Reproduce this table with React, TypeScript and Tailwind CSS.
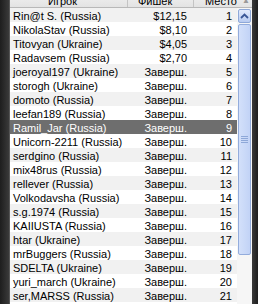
const rows: [string, string, number][] = [
  ["Rin@t S. (Russia)", "$12,15", 1],
  ["NikolaStav (Russia)", "$8,10", 2],
  ["Titovyan (Ukraine)", "$4,05", 3],
  ["Radavsem (Russia)", "$2,70", 4],
  ["joeroyal197 (Ukraine)", "Заверш.", 5],
  ["storogh (Ukraine)", "Заверш.", 6],
  ["domoto (Russia)", "Заверш.", 7],
  ["leefan189 (Russia)", "Заверш.", 8],
  ["Ramil_Jar (Russia)", "Заверш.", 9],
  ["Unicorn-2211 (Russia)", "Заверш.", 10],
  ["serdgino (Russia)", "Заверш.", 11],
  ["mix48rus (Russia)", "Заверш.", 12],
  ["rellever (Russia)", "Заверш.", 13],
  ["Volkodavsha (Russia)", "Заверш.", 14],
  ["s.g.1974 (Russia)", "Заверш.", 15],
  ["KAIIUSTA (Russia)", "Заверш.", 16],
  ["htar (Ukraine)", "Заверш.", 17],
  ["mrBuggers (Russia)", "Заверш.", 18],
  ["SDELTA (Ukraine)", "Заверш.", 19],
  ["yuri_march (Ukraine)", "Заверш.", 20],
  ["ser,MARSS (Russia)", "Заверш.", 21],
];

export default function App() {
  return (
    <div className="flex w-[258px] h-[304px] overflow-hidden bg-[#2c2c2c] text-[11px] font-['Liberation_Sans',Arial,sans-serif] text-black">
      {/* left frame */}
      <div className="w-[10px] shrink-0 bg-gradient-to-r from-[#1e1e1e] to-[#3a3a3a] border-r border-[#555]" />

      <div className="flex flex-col w-[242px] shrink-0 bg-white">
        {/* header, mostly scrolled off the top */}
        <div className="flex h-[20px] -mt-[12px] shrink-0 bg-gradient-to-b from-[#f7f7f7] to-[#e3e3e3] border-b border-[#b8b8b8] leading-[20px] pt-[3px] overflow-hidden">
          <div className="w-[118px] pl-[38px] border-r border-[#c4c4c4]">Игрок</div>
          <div className="w-[66px] pl-[10px] border-r border-[#c4c4c4]">Фишек</div>
          <div className="flex-1 flex pl-[11px]">
            <span>Место</span>
            <span className="ml-[5px] text-[#9a9a9a] text-[8px]">▲</span>
          </div>
        </div>

        <div className="flex flex-1 min-h-0">
          {/* rows */}
          <div className="w-[227px] shrink-0 flex flex-col">
            {rows.map(([name, chips, place], i) => {
              const sel = place === 9;
              const bg = sel
                ? "bg-[#6e6e6e] text-white"
                : i % 2 === 0
                ? "bg-[#f1f1f1]"
                : "bg-white";
              return (
                <div key={place} className={`flex h-[14px] shrink-0 leading-[14px] pt-[1px] whitespace-nowrap ${bg}`}>
                  <div className="w-[118px] pl-[3px] overflow-hidden">{name}</div>
                  <div className="w-[66px] pr-[7px] text-right">{chips}</div>
                  <div className="flex-1 pr-[5px] text-right">{place}</div>
                </div>
              );
            })}
          </div>

          {/* scrollbar */}
          <div className="flex-1 flex flex-col bg-[#f6f6f6] pt-[1px] px-[1px] gap-[1px]">
            <div className="h-[14px] rounded-[2px] border border-[#8ea8d8] bg-gradient-to-b from-[#e4ecfc] to-[#b8cbf1] flex items-center justify-center">
              <svg width="9" height="6" viewBox="0 0 9 6">
                <path d="M1 5 L4.5 1.5 L8 5" fill="none" stroke="#3a5796" strokeWidth="1.8" />
              </svg>
            </div>
            <div className="h-[231px] rounded-[2px] border border-[#93acdc] bg-gradient-to-r from-[#d3e0fa] to-[#c2d3f6] flex items-center justify-center">
              <div className="flex flex-col gap-[1px]">
                <div className="w-[7px] h-[1px] bg-[#8ea8d8]" />
                <div className="w-[7px] h-[1px] bg-[#8ea8d8]" />
                <div className="w-[7px] h-[1px] bg-[#8ea8d8]" />
                <div className="w-[7px] h-[1px] bg-[#8ea8d8]" />
              </div>
            </div>
          </div>
        </div>
      </div>

      {/* right frame */}
      <div className="flex-1 bg-gradient-to-r from-[#3a3a3a] to-[#1e1e1e]" />
    </div>
  );
}
